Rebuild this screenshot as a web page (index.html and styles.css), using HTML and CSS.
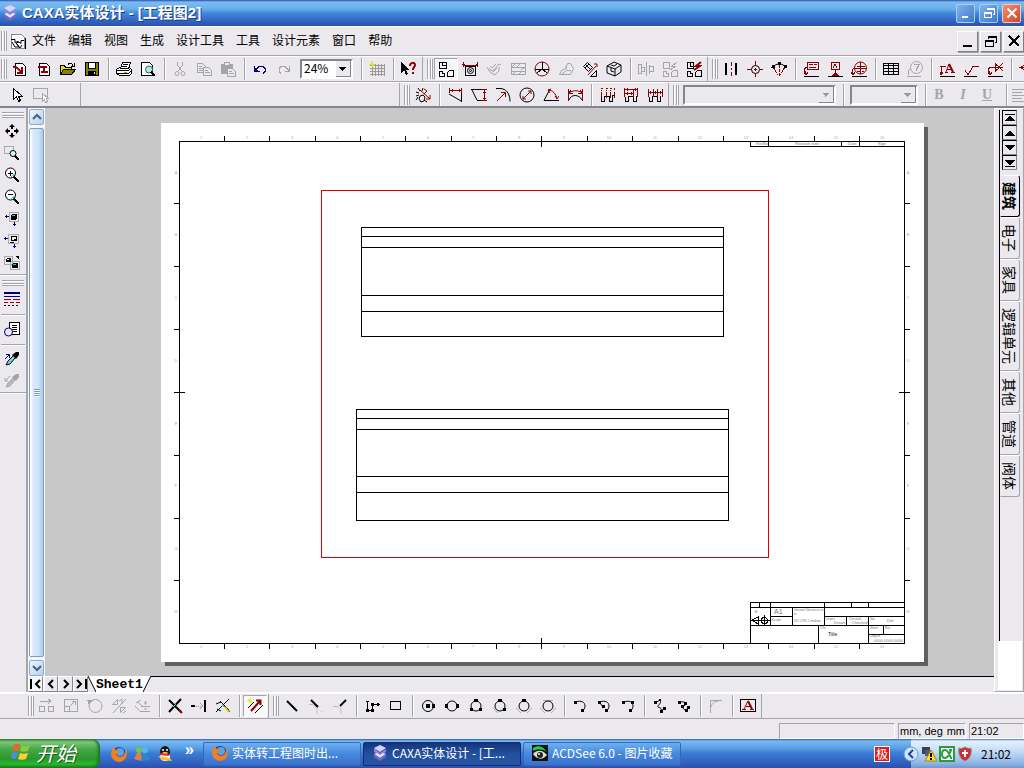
FILE: index.html
```html
<!DOCTYPE html>
<html lang="zh-CN">
<head>
    <meta charset="UTF-8">
    <meta name="viewport" content="width=device-width, initial-scale=1.0">
    <title>CAXA实体设计 - [工程图2]</title>
    <link rel="stylesheet" href="styles.css">
</head>
<body>
    <!-- Title bar -->
    <header class="titlebar">
        <svg class="ic smooth" viewBox="0 0 16 16"><path d="M2 3l6-3 6 3-6 4z" fill="#d8d4ff" stroke="none"/><path d="M2 3v4l6 4 6-4V4l-6 4z" fill="#8d86dc" stroke="none"/><path d="M2 9l3-1 3 2 3-2 3 1-6 4z" fill="#e6e2ff" stroke="none"/><path d="M2 9v3l6 4 6-4V9l-6 4z" fill="#7068c8" stroke="none"/></svg>
        <h1 class="title">CAXA实体设计 - [工程图2]</h1>
        <button class="win-btn" aria-label="最小化"><svg class="ic white" viewBox="0 0 16 16"><path d="M4 11h6v2H4z" class="fill"/></svg></button>
        <button class="win-btn" aria-label="还原"><svg class="ic white" viewBox="0 0 16 16"><path d="M6.500 5V3.500h7v6H12M6 4.500h7M3.500 7.500h7v5h-7zM3 8.500h7"/></svg></button>
        <button class="win-btn close" aria-label="关闭"><svg class="ic white smooth" viewBox="0 0 16 16"><path d="M3.500 3.500l9 9M12.500 3.500l-9 9" stroke-width="2"/></svg></button>
    </header>

    <!-- Menu bar -->
    <nav class="menubar">
        <span class="grip first"></span>
        <svg class="ic doc" viewBox="0 0 16 16"><path d="M1.500 1.500h10l3 3v11h-13z" fill="#fff" stroke="#888"/><path d="M15.500 5v11H2"/><path class="smooth" d="M1 6.500h4v3l3-1 3 2v-3h3M2 9l3 5h4l-3-4 3-1M7 11l3 4 2-3"/></svg>
        <button class="menu">文件</button>
        <button class="menu">编辑</button>
        <button class="menu">视图</button>
        <button class="menu">生成</button>
        <button class="menu">设计工具</button>
        <button class="menu">工具</button>
        <button class="menu">设计元素</button>
        <button class="menu">窗口</button>
        <button class="menu">帮助</button>
        <div class="mdi">
            <button class="mdi-btn" aria-label="最小化文档"><svg class="ic" viewBox="0 0 16 16"><path d="M3 13h9" stroke-width="2"/></svg></button>
            <button class="mdi-btn" aria-label="还原文档"><svg class="ic" viewBox="0 0 16 16"><path d="M5.500 6V3.500h8v6H12M5 4.500h8M2.500 7.500h8v6h-8zM3 8.500h7"/></svg></button>
            <button class="mdi-btn" aria-label="关闭文档"><svg class="ic" viewBox="0 0 16 16"><path d="M3 3l10 10M13 3L3 13" stroke-width="2"/></svg></button>
        </div>
    </nav>

    <!-- Standard toolbar -->
    <div class="toolbar">
        <div class="group">
            <span class="grip first"></span>
            <button class="tool" aria-label="新建图纸"><svg class="ic" viewBox="0 0 16 16"><path d="M3.500 2.500h7l3 3v9h-10z" fill="#fff"/><path class="red smooth" d="M1 6c3-1 5 1 8 5M10 6v6H5" stroke-width="2"/></svg></button>
            <button class="tool" aria-label="新建模型"><svg class="ic" viewBox="0 0 16 16"><path d="M3.500 2.500h7l3 3v9h-10z" fill="#fff"/><path class="red" d="M2 6h9M5 11h7M8 6v5" stroke-width="2"/></svg></button>
            <button class="tool" aria-label="打开"><svg class="ic" viewBox="0 0 16 16"><path d="M.5 13.500v-9h4l1 2h6v2" fill="#e8e000"/><path d="M.5 13.500l3-5h12l-4 5z" fill="#888000"/><path d="M8 3.500c2-2 4-1 5 1M14 2v3h-3"/></svg></button>
            <button class="tool" aria-label="保存"><svg class="ic" viewBox="0 0 16 16"><path d="M1.500 1.500h13v13h-13z" fill="#808000"/><path d="M4.500 1.500h7v6h-7z" fill="#fff"/><path class="fill" d="M4 10h8v4H4z"/><path d="M10.500 11v2" stroke="#fff"/></svg></button>
            <span class="sep"></span>
            <button class="tool" aria-label="打印"><svg class="ic" viewBox="0 0 16 16"><path d="M.5 8.500l3-2h10l2 2v4l-2 2h-10l-3-2z" fill="#fff"/><path d="M4.500 7.500l2-6h8l-2 6z" fill="#fff"/><path d="M7 3.500h5M6 5.500h5M1 9.500h11l3-2M1 12.500h11l3-2"/><path d="M8 11h3" stroke="#a90"/></svg></button>
            <button class="tool" aria-label="打印预览"><svg class="ic" viewBox="0 0 16 16"><path d="M1.500 1.500h8l3 3v10h-11z" fill="#fff"/><circle cx="9" cy="8.500" r="3.500" fill="#9ee" stroke="#555"/><path d="M11 11l4 4" stroke-width="2"/></svg></button>
            <span class="sep"></span>
            <button class="tool" aria-label="剪切" disabled><svg class="ic" viewBox="0 0 16 16"><path d="M5.500 1v3l4 6M10.500 1v3l-4 6"/><circle cx="5" cy="12.500" r="2"/><circle cx="11" cy="12.500" r="2"/></svg></button>
            <button class="tool" aria-label="复制" disabled><svg class="ic" viewBox="0 0 16 16"><path d="M1.500 2.500h5l3 3v6h-8zM3 5.500h3M3 7.500h4M3 9.500h4"/><path d="M7.500 6.500h5l3 3v5h-8zM9 9.500h3M9 11.500h5" fill="#ebe9ed"/></svg></button>
            <button class="tool" aria-label="粘贴" disabled><svg class="ic" viewBox="0 0 16 16"><path class="fill" d="M1 3h12v10H1z"/><path d="M4.500 3.500v-2h5v2M7.500 7.500h5l3 3v5h-8zM9 10.500h3M9 12.500h5" fill="#ebe9ed"/></svg></button>
            <span class="sep"></span>
            <button class="tool" aria-label="撤销"><svg class="ic navy" viewBox="0 0 16 16"><path d="M2.500 5v5h5M3 9.500l4-4h4l2 2v3l-2 2"/><path class="fill" d="M2 6l4 4H2z"/></svg></button>
            <button class="tool" aria-label="重做" disabled><svg class="ic" viewBox="0 0 16 16"><path d="M13.500 5v5h-5M13 9.500l-4-4H5l-2 2v3l2 2"/></svg></button>
            <select class="combo zoom" aria-label="缩放"><option>24%</option></select>
            <span class="sep"></span>
            <button class="tool" aria-label="栅格"><svg class="ic grey" viewBox="0 0 16 16"><path d="M3.500 3v12M6.500 3v12M9.500 3v12M12.500 3v12M15.500 3v12M1 4.500h15M1 7.500h15M1 10.500h15M1 13.500h15"/><path d="M3 0v6M0 3h6M1 1l4 4" stroke="#e8e800"/></svg></button>
            <span class="sep"></span>
            <button class="tool" aria-label="帮助"><svg class="ic" viewBox="0 0 16 16"><path class="fill" d="M0 1v11l3-3 2 5 2-1-2-4h4z"/><path class="red smooth" d="M9 5c0-4 5-4 5-1 0 2-2 2-2 5M12 11v2" stroke-width="2"/></svg></button>
        </div>
        <div class="group">
            <span class="grip"></span>
            <button class="tool pressed" aria-label="标准视图"><svg class="ic" viewBox="0 0 16 16"><path d="M1.500 1.500h7v6h-7zM4.500 2v2.500H8M1.500 10.500h3v2h2v3h-5zM9.500 15.500v-4l2-2h4v6z"/></svg></button>
            <button class="tool" aria-label="向视图"><svg class="ic" viewBox="0 0 16 16"><path d="M3.500 5.500h10v9h-10z"/><circle cx="8.500" cy="9.500" r="3"/><circle cx="8.500" cy="9.500" r="1"/><path class="red" d="M1.500 1v5M15.500 1v5M1 4.500h15M0 3h3M14 3h2"/></svg></button>
            <button class="tool" aria-label="剖视图" disabled><svg class="ic smooth" viewBox="0 0 16 16"><path d="M3 8l4 2 6-7 2 1M1 6l3 5 5 3 4-4V6M10 3l-4 4M4 5l2 2M7 11l4-4"/></svg></button>
            <button class="tool" aria-label="局部剖" disabled><svg class="ic" viewBox="0 0 16 16"><path d="M1.500 2.500h14v11h-14zM1 6.500h14M1 10.500h14M2 6l4-4M7 6l4-4M2 14l4-4M8 14l4-4M11 9l4-3"/></svg></button>
            <button class="tool" aria-label="局部放大"><svg class="ic red" viewBox="0 0 16 16"><circle cx="8" cy="8" r="7"/><path d="M8.500 1v7M1 8.500h14M8 8l-5 4M8 8l5 4" stroke="#000"/></svg></button>
            <button class="tool" aria-label="断裂视图" disabled><svg class="ic smooth" viewBox="0 0 16 16"><path d="M1.500 13.500l2-4 4-2 2-5h3l3 5-3 6zM4 13l5-4 4 1M8 8V5"/></svg></button>
            <button class="tool" aria-label="辅助视图"><svg class="ic smooth" viewBox="0 0 16 16"><path d="M1.500 5.500l4-4 5 5-4 4zM4 4l4 4M3 7l4-4"/><path class="red" d="M6 14l8-9M12 3h3v3"/><path d="M8.500 15.500h6v-6z"/></svg></button>
            <button class="tool" aria-label="轴测图"><svg class="ic smooth" viewBox="0 0 16 16"><path d="M1 5l7-4 7 3v7l-6 4-8-3zM1 5l8 3 6-4M9 8v7M5 4l3 1 3-2M5 7v3l3 1"/></svg></button>
            <span class="sep"></span>
            <button class="tool" aria-label="断开" disabled><svg class="ic" viewBox="0 0 16 16"><path d="M.5 3.500h3v9h-3zM3.500 6.500h3v4h-3M8.500 1v14M11.500 3.500v9M11.500 5.500h4v5h-4"/></svg></button>
            <button class="tool" aria-label="更新视图" disabled><svg class="ic" viewBox="0 0 16 16"><path d="M1.500 1.500h6v6h-6zM1.500 10.500h3v2h2v3h-5zM9.500 15.500v-4l2-2h4v6zM15 1l-5 4h4L8 9"/></svg></button>
            <button class="tool" aria-label="更新全部"><svg class="ic" viewBox="0 0 16 16"><path d="M1.500 1.500h6v6h-6zM4.500 2v3H8M1.500 10.500h3v2h2v3h-5zM9.500 15.500v-4l2-2h4v6z"/><path class="red smooth" d="M15 1l-5 4h4L8 9" stroke-width="2"/></svg></button>
        </div>
        <div class="group">
            <span class="grip"></span>
            <button class="tool" aria-label="中心线"><svg class="ic" viewBox="0 0 16 16"><path d="M3 2v12M13 2v12" stroke-width="2"/><path class="red" d="M8.500 1v4M8.500 7v2M8.500 11v4"/></svg></button>
            <button class="tool" aria-label="中心标记"><svg class="ic" viewBox="0 0 16 16"><circle cx="8.500" cy="8.500" r="4"/><path class="red" d="M8.500 0v5M8.500 7v3M8.500 12v4M0 8.500h5M7 8.500h3M12 8.500h4"/></svg></button>
            <button class="tool" aria-label="参考曲线"><svg class="ic" viewBox="0 0 16 16"><path class="red" d="M2 6l5 8M8.500 4v11M14 6l-5 8" stroke-dasharray="3 1"/><path class="smooth" d="M0 7l2-2 5-2h3l4 2 2 2"/><path class="fill" d="M1 4h3v3H1zM7 1h3v3H7zM13 4h3v3h-3z"/></svg></button>
            <span class="sep"></span>
            <button class="tool" aria-label="引出说明"><svg class="ic red" viewBox="0 0 16 16"><path d="M4.500 1.500h11v7h-11zM6 3.500h4M11 3.500h3M6 6.500h7M4 6l-3 2 2 5M1 11l2 3 2-3"/><path d="M1 15.500h15" stroke="#000"/></svg></button>
            <button class="tool" aria-label="基准符号"><svg class="ic red" viewBox="0 0 16 16"><path d="M4.500 1.500h8v7h-8zM6 7l2-4 2 4M8.500 9v3"/><path class="fill" d="M5 15l3-4 4 4z"/><path d="M1 15.500h15" stroke="#000"/></svg></button>
            <button class="tool" aria-label="基准目标"><svg class="ic red" viewBox="0 0 16 16"><circle cx="9.500" cy="7" r="6"/><path d="M4 7.500h11M9.500 1v12M6 5h3M10 5h4M6 10h3M11 10h2M4 6l-3 3 1 5M0 11l2 3 2-3"/><path d="M1 15.500h15" stroke="#000"/></svg></button>
            <span class="sep"></span>
            <button class="tool" aria-label="明细表"><svg class="ic" viewBox="0 0 16 16"><path d="M.5 2.500h15v11H.5zM5.500 2v12M10.500 2v12M0 4.500h16M0 7.500h16M0 10.500h16"/></svg></button>
            <button class="tool" aria-label="零件序号" disabled><svg class="ic" viewBox="0 0 16 16"><circle cx="9.500" cy="6.500" r="6"/><path d="M7 3.500h5l-3 6M4 7l-3 3 1 4M0 15.500h14"/></svg></button>
            <span class="sep"></span>
            <button class="tool" aria-label="文字标注"><svg class="ic red" viewBox="0 0 16 16"><path class="smooth" d="M7 11l3-8 4 8M8 8.500h5"/><path class="smooth" d="M10 3l4 8" stroke-width="2"/><path d="M6 11.500h3M12 11.500h4M7 5.500H1M2.500 6v8M1 11l1 3 2-3"/><path d="M1 15.500h15" stroke="#000"/></svg></button>
            <button class="tool" aria-label="粗糙度"><svg class="ic red" viewBox="0 0 16 16"><path d="M2 9l3 5 5-8.500h6"/><path d="M1 15.500h13" stroke="#000"/></svg></button>
            <button class="tool" aria-label="焊接符号"><svg class="ic red" viewBox="0 0 16 16"><path d="M3 6.500h13M8.500 3v7l4-3.500zM16 2l-4 4 4 4M4 6l-3 2 2 5M1 11l2 3 2-3"/><path d="M1 15.500h15" stroke="#000"/></svg></button>
            <span class="sep"></span>
            <button class="tool" aria-label="孔标注"><svg class="ic red" viewBox="0 0 16 16"><path d="M0 6.500h8M5 4L2 6.500 5 9M8 3v9"/></svg></button>
        </div>
    </div>

    <!-- Dimension and text toolbar -->
    <div class="toolbar second">
        <div class="group select-group">
            <button class="tool" aria-label="选择"><svg class="ic" viewBox="0 0 16 16"><path d="M4.500 1.500v11l3-3 2 5 2-1-2-4h4z" fill="#fff"/></svg></button>
            <button class="tool" aria-label="框选" disabled><svg class="ic" viewBox="0 0 16 16"><path d="M.5 1.500h14v10H.5z"/><path d="M9.500 6.500v8l2-2 1 3 2-1-1-3h2z" fill="#fff"/></svg></button>
        </div>
        <div class="group blank"></div>
        <div class="group">
            <span class="grip"></span>
            <button class="tool" aria-label="智能标注"><svg class="ic smooth" viewBox="0 0 16 16"><path d="M1 5l3 1M3 1l2 3M8 1l-1 3M1 9l3-1M5 9l3-1 2 2-1 4-3 1-2-3zM9 13l3 2M3 10l-2 3"/><path class="red" d="M5 3l10 9M9 2l3 2-3 3M11 12h4V8"/></svg></button>
            <span class="sep"></span>
            <button class="tool" aria-label="水平标注"><svg class="ic" viewBox="0 0 16 16"><path class="smooth" d="M2 7l12 7"/><path d="M14.500 6v9"/><path class="red" d="M2.500 1v5M14.500 1v5M2 3.500h12M5 2v3M12 2v3"/></svg></button>
            <button class="tool" aria-label="竖直标注"><svg class="ic" viewBox="0 0 16 16"><path class="smooth" d="M1 3l5 10"/><path d="M0 2.500h10M6 13.500h5"/><path class="red" d="M10 2.500h6M10 13.500h6M13.500 3v10M12 5h3M12 11h3"/></svg></button>
            <button class="tool" aria-label="半径标注"><svg class="ic smooth" viewBox="0 0 16 16"><path d="M1 1.500h4c6 0 10 5 10 13"/><path class="red" d="M2 14l8-8M6 5.500h4.500V10"/></svg></button>
            <button class="tool" aria-label="直径标注"><svg class="ic smooth" viewBox="0 0 16 16"><circle cx="8" cy="8" r="7"/><path class="red" d="M4 12l8-8M4 9v3h3M9 4h3v3"/></svg></button>
            <button class="tool" aria-label="角度标注"><svg class="ic smooth" viewBox="0 0 16 16"><path d="M7 2L1 13.500h15"/><path class="red" d="M5 3c5 0 8 4 9 9M12 9l2 3 2-3M8 2L5 3l2 3"/></svg></button>
            <button class="tool" aria-label="弧长标注"><svg class="ic" viewBox="0 0 16 16"><path class="smooth" d="M2 13c2-6 10-6 13 0"/><path class="red" d="M1.500 2v12M15.500 2v12M4 3L2 6h4M13 3l2 3h-4"/><path class="red smooth" d="M2 6c4-3 9-3 13 0"/></svg></button>
            <span class="sep"></span>
            <button class="tool" aria-label="基线标注"><svg class="ic" viewBox="0 0 16 16"><path d="M2.500 9.500v5h3v-5h5v5h3v-6h2"/><path class="red" d="M2.500 5v5M7.500 5v6M11.500 5v6M15.500 5v6M2 1h2M7 1h2M11 1h2M15 1v2M2 3h1M7 3h1M11 3h1"/></svg></button>
            <button class="tool" aria-label="阶梯标注"><svg class="ic" viewBox="0 0 16 16"><path d="M2.500 9.500v5h3v-5h5v5h3v-6"/><path class="red" d="M1.500 1v9M14.500 1v9M2 2.500h12M2 6.500h8M10.500 3v8M4 1v3M12 1v3M4 5v3M8 5v3"/></svg></button>
            <button class="tool" aria-label="连续标注"><svg class="ic" viewBox="0 0 16 16"><path d="M2.500 9.500v5h3v-5h5v5h3v-6"/><path class="red" d="M1.500 2v8M6.500 2v8M10.500 2v8M15.500 2v8M2 5.500h13M3 4v3M8 4v3M13 4v3"/></svg></button>
        </div>
        <div class="group">
            <span class="grip"></span>
            <select class="combo font" aria-label="字体" disabled><option></option></select>
            <span class="sep wide"></span>
            <select class="combo size" aria-label="字号" disabled><option></option></select>
            <span class="sep wide"></span>
            <button class="tool letter" disabled>B</button>
            <button class="tool letter italic" disabled>I</button>
            <button class="tool letter under" disabled>U</button>
            <span class="sep wide"></span>
            <button class="tool" aria-label="左对齐" disabled><svg class="ic" viewBox="0 0 16 16"><path d="M0 2.500h14M0 5.500h10M0 8.500h14M0 11.500h10M0 14.500h14"/></svg></button>
        </div>
    </div>

    <!-- Work area -->
    <main class="workspace">
        <div class="sidebar">
            <span class="hgrip"></span>
            <button class="tool" aria-label="平移"><svg class="ic smooth" viewBox="0 0 16 16"><path class="fill" d="M8 1l3 3H5zM8 15l3-3H5zM1 8l3-3v6zM15 8l-3-3v6z"/><path d="M8 3v3M8 10v3M3 8h3M10 8h3" stroke-width="2"/></svg></button>
            <button class="tool" aria-label="窗口缩放"><svg class="ic" viewBox="0 0 16 16"><path d="M.5 1.500h9v7h-9z" stroke="#aaa"/><circle cx="9" cy="8.500" r="3" fill="#cfe"/><path d="M11 11l4 4" stroke-width="2"/></svg></button>
            <button class="tool" aria-label="放大"><svg class="ic" viewBox="0 0 16 16"><circle cx="6.500" cy="6" r="5" fill="#fff"/><path d="M4 6.500h5M6.500 4v5"/><path d="M7 10l4-3M9 11l2-2" stroke="#2dd"/><path d="M10 10l5 5" stroke-width="2"/></svg></button>
            <button class="tool" aria-label="缩小"><svg class="ic" viewBox="0 0 16 16"><circle cx="6.500" cy="6" r="5" fill="#fff"/><path d="M4 5.500h5"/><path d="M7 10l4-3M9 11l2-2" stroke="#2dd"/><path d="M10 10l5 5" stroke-width="2"/></svg></button>
            <button class="tool" aria-label="显示全部"><svg class="ic" viewBox="0 0 16 16"><path d="M5.500 1.500h9v9h-9z" stroke="#aaa"/><path class="fill" d="M7 4l2-1h4v4l-1 2H7z"/><path d="M8 4.500h3" stroke="#2cc"/><path class="navy" d="M1 5.500h4M2.500 4v3M10.500 11v4M9 13.500h3"/></svg></button>
            <button class="tool" aria-label="显示图纸"><svg class="ic" viewBox="0 0 16 16"><path d="M4.500 1.500h10v9h-10z" stroke="#aaa"/><path d="M7.500 3.500h5v4h-5zM10 6h2M6 9h4" /><path class="navy" d="M0 5.500h4M1.500 4v3M10.500 11v4M9 13.500h3"/></svg></button>
            <button class="tool" aria-label="显示选择"><svg class="ic" viewBox="0 0 16 16"><path d="M.5 1.500h8v8h-8zM6.500 6.500h9v8h-9z" stroke="#aaa"/><path class="fill" d="M8 9l1-1h5v4l-1 1H8zM2 4l1-1h4v3L6 7H2zM11 1h4v4z"/><path d="M9 9.500h3" stroke="#2cc"/><path d="M3 4.500h2" stroke="#fff"/></svg></button>
            <span class="hsep"></span>
            <span class="hgrip"></span>
            <button class="tool" aria-label="线型"><svg class="ic" viewBox="0 0 16 16"><path class="navy" d="M0 2h16" stroke-width="2"/><path class="navy" d="M0 5.500h16"/><path class="red" d="M0 8.500h7M9 8.500h7M0 11.500h4M6 11.500h4M12 11.500h4"/><path d="M0 14.500h2M4 14.500h2M8 14.500h2M12 14.500h2"/></svg></button>
            <span class="hsep gap"></span>
            <button class="tool" aria-label="图素属性"><svg class="ic" viewBox="0 0 16 16"><path d="M5.500 1.500h10v12h-10z" fill="#fff"/><path d="M8 4.500h5M8 6.500h5M8 8.500h5M9 10.500h4"/><circle class="navy" cx="4.500" cy="11" r="4" fill="#ebe9ed"/></svg></button>
            <span class="hsep gap"></span>
            <button class="tool" aria-label="拾取样式"><svg class="ic smooth" viewBox="0 0 16 16"><path d="M2 14l2-4 6-6 2 2-6 7z" fill="#6dd"/><path class="fill" d="M8 4l4 4 3-4V1h-3z"/><path class="navy" d="M1 8l4-4M2 3.500h3.500V7"/></svg></button>
            <button class="tool" aria-label="应用样式" disabled><svg class="ic smooth" viewBox="0 0 16 16"><path d="M2 14l2-4 6-6 2 2-6 7z" fill="#bbb"/><path class="fill" d="M8 4l4 4 3-4V1h-3z"/><path d="M1 8l5-5M1 5v3h3"/></svg></button>
            <span class="hsep"></span>
        </div>

        <div class="scrollbar">
            <button class="arrow" aria-label="向上滚动"><svg class="ic smooth" viewBox="0 0 16 16"><path d="M4 10l4-4 4 4" stroke="#44607f" stroke-width="2"/></svg></button>
            <div class="thumb"><span class="notch"></span></div>
            <button class="arrow" aria-label="向下滚动"><svg class="ic smooth" viewBox="0 0 16 16"><path d="M4 6l4 4 4-4" stroke="#44607f" stroke-width="2"/></svg></button>
        </div>

        <div class="document">
            <div class="canvas">
                <svg class="sheet" viewBox="161 123 763 539">
                    <!-- frame with zone ticks -->
                    <path d="M179.500 141.500h725v502h-725z"/>
                    <path d="M224.500 136v5M269.500 136v5M315.500 136v5M360.500 136v5M405.500 136v5M451.500 136v5M496.500 136v5M541.500 136v11M587.500 136v5M632.500 136v5M678.500 136v5M723.500 136v5M768.500 136v5M814.500 136v5M859.500 136v5"/>
                    <path d="M224.500 643v6M269.500 643v6M315.500 643v6M360.500 643v6M405.500 643v6M451.500 643v6M496.500 643v6M541.500 638v11M587.500 643v6M632.500 643v6M678.500 643v6M723.500 643v6M768.500 643v6M814.500 643v6M859.500 643v6"/>
                    <path d="M174 203.500h5M174 266.500h5M174 329.500h5M174 392.500h11M174 455.500h5M174 518.500h5M174 580.500h5M904 203.500h6M904 266.500h6M904 329.500h6M899 392.500h11M904 455.500h6M904 518.500h6M904 580.500h6"/>
                    <g class="zone">
                        <text x="201" y="139">1</text><text x="247" y="139">2</text><text x="292" y="139">3</text><text x="337" y="139">4</text><text x="383" y="139">5</text><text x="428" y="139">6</text><text x="473" y="139">7</text><text x="519" y="139">8</text><text x="564" y="139">9</text><text x="609" y="139">10</text><text x="655" y="139">11</text><text x="700" y="139">12</text><text x="746" y="139">13</text><text x="791" y="139">14</text><text x="836" y="139">15</text><text x="882" y="139">16</text>
                        <text x="201" y="648">1</text><text x="247" y="648">2</text><text x="292" y="648">3</text><text x="337" y="648">4</text><text x="383" y="648">5</text><text x="428" y="648">6</text><text x="473" y="648">7</text><text x="519" y="648">8</text><text x="564" y="648">9</text><text x="609" y="648">10</text><text x="655" y="648">11</text><text x="700" y="648">12</text><text x="746" y="648">13</text><text x="791" y="648">14</text><text x="836" y="648">15</text><text x="882" y="648">16</text>
                        <text x="176" y="174">A</text><text x="176" y="236">B</text><text x="176" y="299">C</text><text x="176" y="362">D</text><text x="176" y="425">E</text><text x="176" y="487">F</text><text x="176" y="550">G</text><text x="176" y="613">H</text>
                        <text x="908" y="174">A</text><text x="908" y="236">B</text><text x="908" y="299">C</text><text x="908" y="362">D</text><text x="908" y="425">E</text><text x="908" y="487">F</text><text x="908" y="550">G</text><text x="908" y="613">H</text>
                    </g>
                    <!-- revision table -->
                    <path d="M750.500 141v5.500h154M768.500 141v5M841.500 141v5M859.500 141v5"/>
                    <g class="note">
                        <text x="756" y="145">RevNo</text><text x="795" y="145">Revision note</text><text x="848" y="145">Date</text><text x="878" y="145">Sign</text>
                    </g>
                    <!-- title block -->
                    <path d="M750.500 643v-40.500h154M750 607.500h154M759.500 603v4M770.500 603v22M824.500 603v22M851.500 603v4M868.500 603v4M792.500 607v18M770 616.500h22M824 616.500h80M846.500 616v9M868.500 616v27M750 625.500h154M818.500 625v18M883.500 625v9M868 634.500h36"/>
                    <path d="M751 620.500h20M752 620l6-3v7zM758.500 618v6M764.500 615v11"/><circle cx="764.500" cy="620.500" r="3"/>
                    <g class="note">
                        <text x="755" y="613">E</text><text class="mid" x="774" y="614">A1</text><text x="771" y="621">Scale</text>
                        <text class="fine" x="794" y="611">General Tolerances acc.</text><text class="fine" x="794" y="615">to</text><text class="fine" x="794" y="622">ISO 2768-1 medium</text>
                        <text class="fine" x="826" y="620">Drawn</text><text x="834" y="624">Drawn</text><text class="fine" x="849" y="620">Checked</text><text x="852" y="624">Checked</text><text class="fine" x="870" y="620">Std</text><text x="887" y="622">Def</text>
                        <text class="fine" x="820" y="629">Title</text><text class="name" x="828" y="636">Title</text>
                        <text class="fine" x="870" y="629">Sheet</text><text class="fine" x="885" y="629">Rev</text><text class="fine" x="870" y="637">DwgNo</text><text x="874" y="642">0000 0000 0000</text>
                    </g>
                    <!-- selected view boundary -->
                    <path class="bound" d="M321.500 190.500h447v367h-447z"/>
                    <path d="M361.500 227.500h362v109h-362zM361 236.500h362M361 247.500h362M361 295.500h362M361 311.500h362"/>
                    <path d="M356.500 409.500h372v111h-372zM356 418.500h372M356 429.500h372M356 476.500h372M356 492.500h372"/>
                </svg>
            </div>
            <div class="sheet-tabs">
                <button class="nav" aria-label="第一页"><svg class="ic smooth" viewBox="0 0 16 16"><path d="M3 3v10M12 4L8 8l4 4" stroke-width="2"/></svg></button>
                <button class="nav" aria-label="上一页"><svg class="ic smooth" viewBox="0 0 16 16"><path d="M10 4L6 8l4 4" stroke-width="2"/></svg></button>
                <button class="nav" aria-label="下一页"><svg class="ic smooth" viewBox="0 0 16 16"><path d="M6 4l4 4-4 4" stroke-width="2"/></svg></button>
                <button class="nav" aria-label="最后一页"><svg class="ic smooth" viewBox="0 0 16 16"><path d="M4 4l4 4-4 4M13 3v10" stroke-width="2"/></svg></button>
                <svg class="slope" viewBox="0 0 8 16"><path d="M0 0h8v16z" class="paper"/><path d="M0 0l8 16"/></svg>
                <button class="sheet-tab">Sheet1</button>
                <svg class="slope" viewBox="0 0 8 16"><path d="M0 0h8L0 16z" class="paper"/><path d="M8 0L0 16"/></svg>
                <span class="rest"></span>
            </div>
        </div>

        <aside class="catalog">
            <div class="catalog-inner">
                <div class="catalog-nav">
                    <button class="step" aria-label="首个"><svg class="ic" viewBox="0 0 16 16"><path d="M3 4.500h10"/><path class="fill" d="M8 5l5 6H3z"/></svg></button>
                    <button class="step" aria-label="向前"><svg class="ic" viewBox="0 0 16 16"><path class="fill" d="M8 5l5 6H3z"/></svg></button>
                    <button class="step" aria-label="向后"><svg class="ic" viewBox="0 0 16 16"><path class="fill" d="M8 11l5-6H3z"/></svg></button>
                    <button class="step" aria-label="末个"><svg class="ic" viewBox="0 0 16 16"><path d="M3 11.500h10"/><path class="fill" d="M8 11l5-6H3z"/></svg></button>
                </div>
                <button class="cat active">建筑</button>
                <button class="cat">电子</button>
                <button class="cat">家具</button>
                <button class="cat">逻辑单元</button>
                <button class="cat">其他</button>
                <button class="cat">管道</button>
                <button class="cat">阀体</button>
            </div>
            <div class="catalog-foot"></div>
        </aside>
    </main>

    <!-- Drawing toolbar -->
    <div class="toolbar drawing">
        <div class="group">
            <span class="grip first"></span>
            <button class="tool" aria-label="移动" disabled><svg class="ic" viewBox="0 0 16 16"><path d="M.5 8.500h5v5h-5zM9.500 8.500h5v5h-5zM1 3.500h10M9 1l3 2-3 3"/></svg></button>
            <button class="tool" aria-label="缩放图形" disabled><svg class="ic" viewBox="0 0 16 16"><path d="M1.500 1.500h13v12h-13zM1.500 8.500h5v5M7 8l5-5M9 3.500h3.500V7"/></svg></button>
            <button class="tool" aria-label="旋转" disabled><svg class="ic" viewBox="0 0 16 16"><circle cx="8.500" cy="8" r="6.500"/><path class="fill" d="M0 2h6L2 7z"/></svg></button>
            <button class="tool" aria-label="镜像" disabled><svg class="ic smooth" viewBox="0 0 16 16"><path d="M1.500 6.500h5v-5zM8 3l3-2v5M15 1L2 15M9.500 9.500v5l5-5zM12 15l3-2"/></svg></button>
            <button class="tool" aria-label="偏移" disabled><svg class="ic smooth" viewBox="0 0 16 16"><path d="M1 5l5-3M0 8l5 5.500h10M6 8.500h9M10.500 3v4M9 5h3M9 11h3M3 4l4 4"/></svg></button>
            <span class="sep"></span>
            <button class="tool" aria-label="裁剪"><svg class="ic smooth" viewBox="0 0 16 16"><path d="M2 2l12 12M14 1L2 14" stroke-width="2"/><path d="M6 9l3-3" stroke="#2cc"/><path class="red" d="M12 12l3 3" stroke-width="2"/></svg></button>
            <button class="tool" aria-label="延伸"><svg class="ic" viewBox="0 0 16 16"><path d="M0 8h4M14 2v12" stroke-width="2"/><path d="M5 8.500h7" stroke="#999" stroke-dasharray="1 1"/><path d="M9 5l3 3-3 3" stroke="#999"/></svg></button>
            <button class="tool" aria-label="打断"><svg class="ic smooth" viewBox="0 0 16 16"><path d="M1 6l5-2 9 10M14 1L1 14M2 11l4 2M5 3l9 9" /><path d="M10 9l4 5" stroke="#dc0" stroke-width="2"/><path d="M7 7l2 2" stroke="#2cc"/></svg></button>
            <span class="sep"></span>
            <button class="tool pressed" aria-label="智能捕捉"><svg class="ic smooth" viewBox="0 0 16 16"><path d="M1 10l6-6M8 15l8-8"/><path class="red" d="M4 13L13 3M9 2.500h4.500V7" stroke-width="2"/><path d="M3 0v6M0 3h6M1 1l4 4" stroke="#e8e800"/></svg></button>
        </div>
        <div class="group">
            <span class="grip"></span>
            <button class="tool" aria-label="直线"><svg class="ic smooth" viewBox="0 0 16 16"><path d="M3 3l10 10" stroke-width="2"/></svg></button>
            <button class="tool" aria-label="切线"><svg class="ic smooth" viewBox="0 0 16 16"><path d="M1 6.500h4l4 4v5M14 13v1" stroke="#bbb"/><path d="M3 2l7 7" stroke-width="2"/></svg></button>
            <button class="tool" aria-label="法线"><svg class="ic smooth" viewBox="0 0 16 16"><path d="M1 8.500h5l3 3v4" stroke="#bbb"/><path d="M8 8l6-6" stroke-width="2"/></svg></button>
            <span class="sep"></span>
            <button class="tool" aria-label="连续直线"><svg class="ic" viewBox="0 0 16 16"><path d="M3.500 3v10M2 3.500h3M2 12.500h7M8.500 13V6.500H16"/><path class="fill" d="M2 11h3v3H2zM7 5h3v3H7zM13 5h2v3h-2zM7 11h3v3H7z"/></svg></button>
            <button class="tool" aria-label="矩形"><svg class="ic" viewBox="0 0 16 16"><path d="M2.500 3.500h10v8h-10z"/></svg></button>
            <span class="sep"></span>
            <button class="tool" aria-label="圆心半径圆"><svg class="ic" viewBox="0 0 16 16"><circle cx="8" cy="8" r="5.500"/><path class="fill" d="M6 6h4v4H6zM12 6h3v4h-3z"/></svg></button>
            <button class="tool" aria-label="两点圆"><svg class="ic" viewBox="0 0 16 16"><circle cx="8" cy="8" r="5"/><path class="fill" d="M1 6h3v4H1zM12 6h3v4h-3z"/></svg></button>
            <button class="tool" aria-label="三点圆"><svg class="ic" viewBox="0 0 16 16"><circle cx="8" cy="8" r="5"/><path class="fill" d="M6 1h4v3H6zM2 10h3v3H2zM11 10h3v3h-3z"/></svg></button>
            <button class="tool" aria-label="一切点圆"><svg class="ic" viewBox="0 0 16 16"><path d="M1 10l5 5" stroke="#aaa"/><circle cx="8" cy="8" r="5"/><path class="fill" d="M6 1h4v3H6zM11 10h3v3h-3z"/></svg></button>
            <button class="tool" aria-label="两切点圆"><svg class="ic" viewBox="0 0 16 16"><path d="M0 10l5 5M16 10l-5 5" stroke="#aaa"/><circle cx="8" cy="8" r="5"/><path class="fill" d="M6 1h4v3H6z"/></svg></button>
            <button class="tool" aria-label="三切点圆"><svg class="ic" viewBox="0 0 16 16"><path d="M0 10l5 5M16 10l-5 5M3 2.500h10" stroke="#aaa"/><circle cx="8" cy="8" r="5"/></svg></button>
            <span class="sep"></span>
            <button class="tool" aria-label="两点圆弧"><svg class="ic smooth" viewBox="0 0 16 16"><path d="M4 4c5-2 9 0 9 4 0 2-1 4-3 5"/><path class="fill" d="M2 3h3v3H2zM9 11h3v3H9z"/></svg></button>
            <button class="tool" aria-label="圆心圆弧"><svg class="ic smooth" viewBox="0 0 16 16"><path d="M4 4c5-2 9 0 9 4 0 2-1 4-3 5M4 5l3 4"/><path class="fill" d="M2 3h3v3H2zM9 11h3v3H9zM6 7h3v3H6z"/></svg></button>
            <button class="tool" aria-label="三点圆弧"><svg class="ic smooth" viewBox="0 0 16 16"><path d="M4 4c5-2 9 0 9 4 0 2-1 4-3 5"/><path class="fill" d="M2 3h3v3H2zM9 11h3v3H9zM11 3h3v3h-3z"/></svg></button>
            <span class="sep"></span>
            <button class="tool" aria-label="样条曲线"><svg class="ic smooth" viewBox="0 0 16 16"><path d="M3 5l5-3c2 4-3 5-2 7 1 1 4 0 3 4l4-3"/><path class="fill" d="M2 3h3v3H2zM7 1h2v2H7zM8 12h3v3H8zM11 9h3v3h-3z"/></svg></button>
            <button class="tool" aria-label="曲线"><svg class="ic smooth" viewBox="0 0 16 16"><path d="M3 4c8-1 8 2 4 5 0 3 3 4 6 1"/><path class="fill" d="M2 3h3v3H2zM8 4h3v3H8zM5 7h3v3H5zM9 11h3v3H9zM11 8h3v3h-3z"/></svg></button>
            <span class="sep"></span>
            <button class="tool" aria-label="圆角" disabled><svg class="ic smooth" viewBox="0 0 16 16"><path d="M2.500 15V2.500H14M3 9c1-4 4-6 8-6"/></svg></button>
            <span class="sep"></span>
            <button class="tool" aria-label="文字"><svg class="ic" viewBox="0 0 16 16"><path d="M.5 1.500h15v12H.5z"/><path class="red smooth" d="M4 11l4-8M6 8.500h4"/><path class="red smooth" d="M8 3l4 8" stroke-width="2"/><path class="red" d="M2 11.500h4M10 11.500h4"/></svg></button>
        </div>
    </div>

    <!-- Status bar -->
    <footer class="status">
        <span class="pane message"></span>
        <span class="pane units"><span>mm, deg</span><span>mm</span></span>
        <span class="pane clock">21:02</span>
    </footer>

    <!-- Taskbar -->
    <div class="taskbar">
        <button class="start">
            <svg class="flag" viewBox="0 0 20 20"><path d="M3 3c3-2 5-1 6 0L7 9C5 8 3 8 1 9z" fill="#f0602c"/><path d="M11 3c3 2 5 1 8 0l-2 6c-3 1-5 1-8 0z" fill="#8ccc3c"/><path d="M1 11c2-1 4-1 6 0l-2 6c-2-1-4-1-5 0z" fill="#4c8cf0"/><path d="M9 11c2 1 5 1 8 0l-2 6c-3 1-6 1-8 0z" fill="#fcd030"/></svg>
            开始
        </button>
        <div class="quick">
            <button class="launch" aria-label="Firefox"><svg class="app" viewBox="0 0 16 16"><circle cx="8" cy="8" r="7" fill="#27479c"/><circle cx="9" cy="6" r="4" fill="#5da2e0"/><path d="M1 4c0-2 1-2 1-3l3 3 3 2-3 2c1 3 5 4 8 1l2-6c3 9-3 13-7 13S0 12 0 8z" fill="#f08020"/></svg></button>
            <button class="launch" aria-label="MSN"><svg class="app" viewBox="0 0 16 16"><circle cx="5" cy="4" r="3" fill="#78c058"/><circle cx="11" cy="4" r="3" fill="#58b8e8"/><path d="M0 13l3-6h4l1 8z" fill="#e08050"/><path d="M7 15l2-8h4l3 7z" fill="#2c88c8"/></svg></button>
            <button class="launch" aria-label="QQ"><svg class="app" viewBox="0 0 16 16"><ellipse cx="8" cy="6" rx="5" ry="6" fill="#181818"/><ellipse cx="8" cy="11" rx="5" ry="4" fill="#fff"/><circle cx="6" cy="4" r="1" fill="#fff"/><circle cx="10" cy="4" r="1" fill="#fff"/><path d="M5 6h6l-3 2zM1 10l4 4 10 1-2-3-6-1z" fill="#fb3"/><path d="M3 8l9 1" stroke="#e22" stroke-width="2"/></svg></button>
            <button class="launch more" aria-label="更多">»</button>
        </div>
        <div class="tasks">
            <button class="task"><svg class="app" viewBox="0 0 16 16"><circle cx="8" cy="8" r="7" fill="#27479c"/><circle cx="9" cy="6" r="4" fill="#5da2e0"/><path d="M1 4c0-2 1-2 1-3l3 3 3 2-3 2c1 3 5 4 8 1l2-6c3 9-3 13-7 13S0 12 0 8z" fill="#f08020"/></svg>实体转工程图时出...</button>
            <button class="task current"><svg class="app" viewBox="0 0 16 16"><path d="M2 3l6-3 6 3-6 4z" fill="#d8d4ff"/><path d="M2 3v4l6 4 6-4V4l-6 4z" fill="#8d86dc"/><path d="M2 9l3-1 3 2 3-2 3 1-6 4z" fill="#e6e2ff"/><path d="M2 9v3l6 4 6-4V9l-6 4z" fill="#7068c8"/></svg>CAXA实体设计 - [工...</button>
            <button class="task"><svg class="app" viewBox="0 0 16 16"><path d="M0 0h16v16H0z" fill="#111"/><path d="M1 3c5-3 10-2 14 4-5-3-9-3-14-1z" fill="#2c4"/><path d="M1 9c4-5 10-4 14 1-4 5-10 5-14-1z" fill="#ddd"/><circle cx="8" cy="10" r="3" fill="#222"/><circle cx="7" cy="9" r="1" fill="#fff"/></svg>ACDSee 6.0 - 图片收藏</button>
        </div>
        <span class="ime">极</span>
        <div class="tray">
            <button class="hide" aria-label="隐藏图标"><svg class="app" viewBox="0 0 16 16"><circle cx="8" cy="8" r="7" fill="#cfe4fa" stroke="#6d9ad4"/><path d="M10 4L6 8l4 4" fill="none" stroke="#1c4690" stroke-width="2"/></svg></button>
            <svg class="app" viewBox="0 0 16 16"><path d="M1 1h8v7H1z" fill="#345"/><path d="M4 4h6v6H4z" fill="#557"/><path d="M10 4l6 11H4z" fill="#fd2" stroke="#a80"/><path d="M10 7v4M10 12v2" stroke="#000" stroke-width="2"/></svg>
            <svg class="app" viewBox="0 0 16 16"><path d="M1 1h14v14H1z" fill="#fff" stroke="#2a9c3c" stroke-width="2"/><path d="M12 4c-2 6-4 8-6 8s-3-2-3-4 1-4 3-4 4 3 6 8h1M10 4h3" fill="none" stroke="#2a9c3c" stroke-width="2"/></svg>
            <svg class="app" viewBox="0 0 16 16"><path d="M8 1c2 1 4 2 6 1 1 6-1 11-6 13C3 13 1 8 2 2c2 1 4 0 6-1z" fill="#d22c30" stroke="#8a9098"/><path d="M8 4v7M5 7h6" stroke="#fff" stroke-width="2"/></svg>
            <span class="time">21:02</span>
        </div>
    </div>
</body>
</html>
```
FILE: styles.css
```css
* {
    box-sizing: border-box;
}

body {
    margin: 0;
    height: 100vh;
    display: flex;
    flex-direction: column;
    overflow: hidden;
    background: #ebe9ed;
    color: #000;
    font-family: "Noto Sans CJK SC", sans-serif;
    font-size: 12px;
}

button {
    display: flex;
    align-items: center;
    justify-content: center;
    flex: none;
    margin: 0;
    padding: 0;
    border: none;
    background: none;
    color: inherit;
    font: inherit;
}

/* Icons */
.ic {
    width: 16px;
    height: 16px;
    flex: none;
    fill: none;
    stroke: currentColor;
    shape-rendering: crispEdges;
}

.ic circle,
.smooth {
    shape-rendering: auto;
}

.fill {
    fill: currentColor;
    stroke: none;
}

.red {
    color: #8b0000;
    stroke: #8b0000;
}

.navy {
    color: #000080;
    stroke: #000080;
}

.grey {
    color: #999;
    stroke: #999;
}

.white {
    color: #fff;
}

.app {
    width: 16px;
    height: 16px;
    flex: none;
}

/* Title bar */
.titlebar {
    display: flex;
    align-items: center;
    gap: 4px;
    flex: none;
    height: 26px;
    padding: 0 3px 0 2px;
    color: #fff;
    background: linear-gradient(#2a50ae 0, #7dbbf0 2px, #68aeea 9px, #4089dc 13px, #3568c4 20px, #2a51ae 26px);
}

.title {
    flex: 1;
    margin: 0;
    font: bold 15px/24px "Liberation Sans", "Noto Sans CJK SC", sans-serif;
    text-shadow: 1px 1px #1c3c80;
}

.win-btn {
    width: 19px;
    height: 19px;
    border: 1px solid #a9cdf4;
    border-radius: 2px;
    background: linear-gradient(135deg, #7fb4ec, #3d78cc);
}

.win-btn.close {
    border-color: #f4c8bc;
    background: linear-gradient(135deg, #ec9478, #d14424);
}

/* Menu bar */
.menubar {
    display: flex;
    align-items: center;
    flex: none;
    height: 30px;
    border-top: 1px solid #fff;
    border-bottom: 1px solid #a5a5a8;
}

.doc {
    margin: 0 6px 0 2px;
}

.menu {
    margin-right: 12px;
    padding-bottom: 2px;
    line-height: 20px;
}

.mdi {
    display: flex;
    gap: 2px;
    margin-left: auto;
}

.mdi-btn {
    width: 21px;
    height: 21px;
    border: 1px solid;
    border-color: #fff #808080 #808080 #fff;
    box-shadow: 1px 1px #a5a5a8;
}

/* Toolbars */
.toolbar {
    display: flex;
    flex: none;
    height: 26px;
    overflow: hidden;
    border-top: 1px solid #fff;
    border-bottom: 1px solid #a5a5a8;
}

.toolbar.second {
    border-bottom: 2px solid #85858f;
}

.toolbar.drawing {
    padding-left: 27px;
}

.group {
    display: flex;
    align-items: center;
    flex: none;
    padding-right: 1px;
    border-right: 1px solid #a5a5a8;
}

.select-group {
    width: 81px;
    padding-left: 5px;
}

.blank {
    width: 319px;
}

.grip {
    flex: none;
    width: 6px;
    height: 20px;
    margin: 0 1px 0 4px;
    border: 1px solid #a5a5a8;
    border-width: 0 1px;
    background: linear-gradient(90deg, #fff 1px, transparent 1px 2px, #a5a5a8 2px 3px, #fff 3px);
}

.grip.first {
    margin-left: 1px;
    margin-right: 1px;
}

.tool {
    width: 24px;
    height: 22px;
}

.tool:disabled {
    color: #a5a5a8;
}

.tool.pressed {
    border: 1px solid;
    border-color: #a5a5a8 #fff #fff #a5a5a8;
    background: #f7f6f8;
}

.sep {
    flex: none;
    width: 2px;
    height: 22px;
    margin: 0 2px 0 4px;
    border-left: 1px solid #a5a5a8;
    border-right: 1px solid #fff;
}

.sep.wide {
    margin: 0 0 0 7px;
}

.combo {
    appearance: none;
    flex: none;
    height: 20px;
    padding: 0 0 2px 2px;
    border: 2px solid;
    border-color: #85858a #fff #fff #85858a;
    border-radius: 0;
    color: #000;
    font: 12px/14px "Noto Sans CJK SC", sans-serif;
    background-color: #fff;
    /* caret halves, button face, button edge */
    background-image:
        linear-gradient(45deg, transparent 50%, currentColor 50%),
        linear-gradient(135deg, currentColor 50%, transparent 50%),
        linear-gradient(#ebe9ed, #ebe9ed),
        linear-gradient(#85858a, #85858a);
    background-position: right 8px top 6px, right 4px top 6px, right 1px top 0, right 0 top 0;
    background-size: 4px 4px, 4px 4px, 14px 15px, 15px 16px;
    background-repeat: no-repeat;
}

.combo:disabled {
    color: #999;
    background-color: #ebe9ed;
    opacity: 1;
}

.zoom {
    width: 53px;
    margin: 0 4px;
}

.font {
    width: 153px;
    margin-left: 3px;
}

.size {
    width: 68px;
    margin-left: 5px;
}

.letter {
    font: bold 14px "Liberation Serif", serif;
}

.letter.italic {
    font-style: italic;
}

.letter.under {
    text-decoration: underline;
}

/* Work area */
.workspace {
    display: flex;
    flex: 1;
    min-height: 0;
    border-bottom: 1px solid #fff;
}

.sidebar {
    display: flex;
    flex-direction: column;
    flex: none;
    width: 28px;
    border-right: 2px solid #a5a5a8;
}

.hgrip {
    flex: none;
    height: 6px;
    margin: 4px 2px 2px;
    border: 1px solid #a5a5a8;
    border-width: 1px 0;
    background: linear-gradient(#fff 1px, transparent 1px 2px, #a5a5a8 2px 3px, #fff 3px);
}

.hsep {
    flex: none;
    height: 2px;
    border-top: 1px solid #a5a5a8;
    border-bottom: 1px solid #fff;
}

.hsep.gap {
    margin: 4px 1px 2px;
}

.scrollbar {
    display: flex;
    flex-direction: column;
    flex: none;
    width: 17px;
    padding: 1px;
    gap: 3px;
    background: #f4f7fc;
}

.arrow {
    height: 16px;
    border: 1px solid #92abc8;
    border-radius: 2px;
    background: linear-gradient(135deg, #eef6ff, #b7cfeb);
}

.thumb {
    display: flex;
    align-items: center;
    justify-content: center;
    flex: 1;
    border: 1px solid #7f9bbd;
    border-radius: 2px;
    background: linear-gradient(90deg, #fff 1px, #d8e9fc 3px, #d0e4fb 8px, #aec8e6);
}

.notch {
    width: 6px;
    height: 8px;
    background: repeating-linear-gradient(#7f9bbd 0 1px, #f4f9ff 1px 2px);
}

.scrollbar .arrow:last-child {
    margin-bottom: 15px;
}

.document {
    display: flex;
    flex-direction: column;
    flex: 1;
    min-width: 0;
    margin-left: -17px;
}

.canvas {
    flex: 1;
    min-height: 0;
    margin-left: 17px;
    padding: 15px 70px 0 116px;
    background: #c8c8c8;
}

.sheet {
    display: block;
    width: 100%;
    background: #fff;
    box-shadow: 4px 4px #606060;
    fill: none;
    stroke: #000;
    shape-rendering: crispEdges;
}

.bound {
    stroke: #e00000;
}

.sheet text {
    fill: #777;
    stroke: none;
    font-family: "Liberation Sans", sans-serif;
    font-size: 4px;
}

.sheet .zone text {
    fill: #aaa;
    text-anchor: middle;
}

.sheet .fine {
    font-size: 3px;
}

.sheet .mid {
    font-size: 7px;
}

.sheet .name {
    fill: #222;
    font-size: 5px;
}

.sheet-tabs {
    display: flex;
    flex: none;
    height: 16px;
}

.nav {
    width: 15px;
    border: 1px solid;
    border-color: #fff #85858a #85858a #fff;
}

.slope {
    width: 8px;
    height: 16px;
    stroke: #000;
}

.paper {
    fill: #fff;
    stroke: none;
}

.sheet-tab {
    background: #fff;
    font: bold 13px "Liberation Mono", monospace;
}

.rest {
    flex: 1;
    border-top: 1px solid #000;
}

/* Catalog tabs */
.catalog {
    display: flex;
    flex-direction: column;
    flex: none;
    width: 30px;
    padding: 1px 1px 1px 3px;
    border: 1px solid;
    border-color: #fff #a5a5a8 #a5a5a8 #fff;
}

.catalog-inner {
    flex: 1;
    margin-left: 1px;
    border-left: 1px solid #000;
}

.catalog-nav {
    padding: 0 0 5px 2px;
}

.step {
    width: 15px;
    height: 15px;
    border: 1px solid;
    border-color: #000 #85858a #85858a #000;
}

.cat {
    width: 20px;
    padding: 6px 0;
    border: 1px solid;
    border-color: #fff #a5a5a8 #a5a5a8 transparent;
    border-radius: 0 3px 3px 0;
    writing-mode: vertical-rl;
    text-orientation: sideways;
    font-size: 14px;
    line-height: 18px;
}

.cat.active {
    border-color: #fff #000 #000 #ebe9ed;
    font-weight: bold;
}

.catalog-foot {
    height: 49px;
    background: #fff;
}

/* Status bar */
.status {
    display: flex;
    align-items: flex-end;
    gap: 3px;
    flex: none;
    height: 20px;
    padding-left: 779px;
    font: 11px "Liberation Sans", sans-serif;
}

.pane {
    height: 16px;
    padding-left: 1px;
    border: 1px solid;
    border-color: #a5a5a8 #fff #fff #a5a5a8;
    line-height: 14px;
}

.message {
    flex: 1;
}

.units {
    display: flex;
    justify-content: space-between;
    width: 68px;
}

.clock {
    width: 55px;
}

/* Taskbar */
.taskbar {
    display: flex;
    align-items: center;
    flex: none;
    height: 29px;
    color: #fff;
    background: linear-gradient(#2c5cba 0, #78baf0 2px, #5aa0e6 9px, #3d7dd4 14px, #3060c0 24px, #294fae 29px);
}

.start {
    gap: 5px;
    width: 100px;
    height: 29px;
    padding: 0 13px 3px 0;
    border-radius: 0 8px 8px 0;
    background: linear-gradient(#3c8a3c 0, #7cc87a 3px, #48a848 10px, #2c962e 20px, #24bc2a 25px, #1c7c20 29px);
    box-shadow: inset -2px 0 3px #1e6e22;
    font-size: 20px;
    font-style: italic;
    text-shadow: 1px 1px #1c5c20;
}

.flag {
    width: 20px;
    height: 20px;
}

.quick {
    display: flex;
    align-items: center;
    gap: 7px;
    width: 103px;
    padding-left: 11px;
}

.launch.more {
    align-items: flex-start;
    height: 24px;
    margin-left: 5px;
    font: bold 16px/16px "Liberation Sans", sans-serif;
}

.tasks {
    display: flex;
    flex: 1;
    gap: 2px;
}

.task {
    flex: 0 1 158px;
    justify-content: flex-start;
    gap: 4px;
    height: 24px;
    padding: 0 0 1px 8px;
    border: 1px solid #3468bc;
    border-radius: 2px;
    background: linear-gradient(#6cb0ee, #4688dc 50%, #3a70cc);
    line-height: 20px;
    white-space: nowrap;
}

.task.current {
    border-color: #122e70;
    background: linear-gradient(#16357c, #23509e 50%, #2654a4);
}

.ime {
    width: 16px;
    height: 16px;
    margin-right: 21px;
    border: 1px solid #fff;
    background: #e01818;
    line-height: 13px;
    text-align: center;
}

.tray {
    display: flex;
    align-items: center;
    gap: 2px;
    height: 29px;
    padding: 0 13px 0 0;
    background: linear-gradient(#3c78c8 0, #e4f1fd 2px, #c4dcf6 12px, #8fb6e6 24px, #6c98d4 29px);
    color: #000;
}

.hide {
    margin-left: -8px;
}

.time {
    margin-left: 6px;
    padding-bottom: 1px;
}
```
